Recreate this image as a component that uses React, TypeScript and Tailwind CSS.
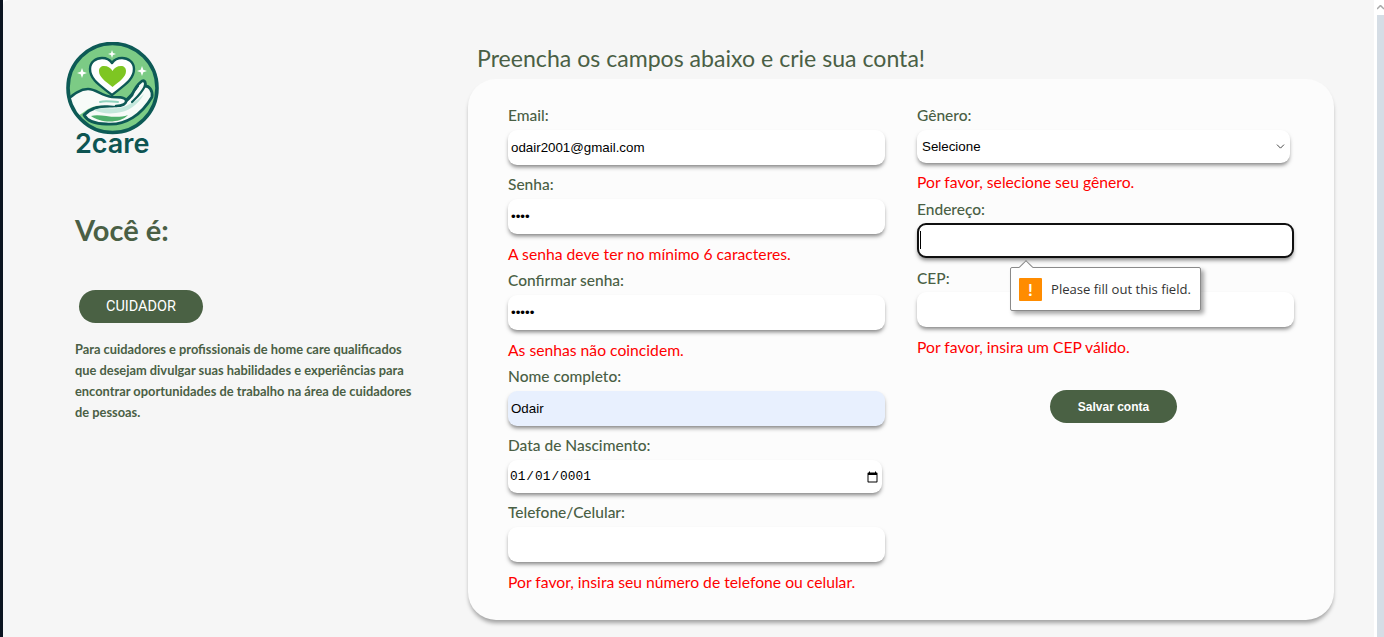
import { ChevronDown } from "lucide-react";

const Logo = () => (
  <svg width="96" height="96" viewBox="0 0 96 96" className="block">
    <defs>
      <clipPath id="disc">
        <circle cx="46.5" cy="46" r="44.5" />
      </clipPath>
    </defs>
    <circle cx="46.5" cy="46" r="44.5" fill="#7ccb85" />
    <g clipPath="url(#disc)">
      <path d="M18 73 C 24 66 34 64 44 64 C 54 65 60 60 66 53 C 68 48 72 42 76 39 C 79 38 80 41 79 44 C 83 44 87 48 86 55 C 76 72 60 84 40 82 C 30 82 22 80 18 73 Z" fill="#f7fbf8" stroke="#0d5a56" strokeWidth="2.8" strokeLinejoin="round" />
      <path d="M28 68 C 38 64 48 69 60 64 C 68 60 72 58 78 52 C 72 63 62 70 50 71 C 42 72 34 71 28 68 Z" fill="#c4e8dc" />
      <path d="M25 74 C 35 71 48 78 62 73 C 54 82 34 81 25 74 Z" fill="#4fb06c" />
      <path d="M-2 60 C 8 52 14 47 22 47 C 30 47 36 54 46 55 C 52 55 58 55 60 58 C 61 62 56 64 50 64 C 42 63 30 62 22 67 C 16 71 10 76 4 78 L -2 72 Z" fill="#f7fbf8" />
      <path d="M-2 60 C 8 52 14 47 22 47 C 30 47 36 54 46 55 C 52 55 58 55 60 58 C 61 62 56 64 50 64" fill="none" stroke="#0d5a56" strokeWidth="2.6" strokeLinecap="round" />
      <path d="M34 60 C 40 58 46 60 52 60" fill="none" stroke="#8fd3bd" strokeWidth="2" strokeLinecap="round" />
    </g>
    <path d="M60 58 C 64 54 68 50 72 44 M66 60 C 70 56 75 52 79 44" fill="none" stroke="#0d5a56" strokeWidth="2.2" strokeLinecap="round" />
    <path d="M46 53 C 35 44 24 38 24 27 C 24 20 30 16 36 16 C 40 16 44 18 46 21 C 48 18 52 16 56 16 C 62 16 68 20 68 27 C 68 38 57 44 46 53 Z" fill="#ffffff" stroke="#0d5a56" strokeWidth="2.4" strokeLinejoin="round" />
    <path d="M46.5 45 C 39 39 33 35 33 29 C 33 26 35 24 38 24 C 42 24 45 26 46.5 29 C 48 26 51 24 55 24 C 58 24 60 26 60 29 C 60 35 54 39 46.5 45 Z" fill="#7ec622" />
    <circle cx="46.5" cy="46" r="44.5" fill="none" stroke="#0d5a56" strokeWidth="3.6" />
    <path d="M46 8 L47 11 L50 12 L47 13 L46 16 L45 13 L42 12 L45 11 Z" fill="#ffffff" />
    <path d="M16 26 L17.3 29.7 L21 31 L17.3 32.3 L16 36 L14.7 32.3 L11 31 L14.7 29.7 Z" fill="#ffffff" />
    <path d="M76 24 L77.3 27.7 L81 29 L77.3 30.3 L76 34 L74.7 30.3 L71 29 L74.7 27.7 Z" fill="#ffffff" />
  </svg>
);

const Field = ({ label, error, children, labelClass }: { label: string; error?: string; children: React.ReactNode; labelClass?: string }) => (
  <div className={`relative ${error ? "mb-[9px]" : "mb-[10px]"}`}>
    <label className={`mb-1 block h-5 text-[15.5px] font-medium text-[#4a5f45] ${labelClass ?? "leading-[18px]"}`}>{label}</label>
    {children}
    {error && <p className="mt-[11px] h-[17px] text-[15.7px] leading-[18px] text-[#ff0000]">{error}</p>}
  </div>
);

const inputClass =
  "block h-[35px] w-full rounded-[9px] bg-white pl-[3px] text-[13.33px] text-black shadow-[0_3px_4px_-1px_rgba(0,0,0,0.5)] outline-none [font-family:'Liberation_Sans',sans-serif]";

const App = () => {
  return (
    <div className="flex h-[637px] w-[1384px] overflow-hidden bg-white [font-family:'Lato',sans-serif]">
      <div className="w-[3px] shrink-0 bg-[#0b1420]" />
      <main className="flex h-full w-[1371px] shrink-0 rounded-tl-[6px] bg-[#f6f6f6]">
        <aside className="w-[465px] shrink-0 pt-[42px] pl-[63px]">
          <Logo />
          <p className="mt-[-9px] ml-[9px] h-[30px] text-[27px] leading-[30px] font-semibold text-[#0d5452] [font-family:'Inter',sans-serif]">2care</p>
          <h2 className="mt-[53px] ml-[9px] text-[29px] leading-9 font-bold text-[#4a5f45]">Você é:</h2>
          <button className="mt-[42px] ml-[13px] block h-[33px] w-[124px] rounded-full bg-[#4a6144] text-[14.5px] text-white [font-family:'Roboto',sans-serif]">
            CUIDADOR
          </button>
          <p className="mt-[16px] ml-[9px] w-[345px] text-[12.85px] leading-[21px] font-bold text-[#4a5f45]">
            Para cuidadores e profissionais de home care qualificados que desejam divulgar suas habilidades e experiências para encontrar oportunidades de trabalho na área de cuidadores de pessoas.
          </p>
        </aside>

        <section className="pt-[43px]">
          <h1 className="ml-[9px] h-[36px] text-[23.1px] leading-[30px] text-[#4a5f45]">Preencha os campos abaixo e crie sua conta!</h1>
          <form className="grid h-[541px] w-[866px] grid-cols-[377px_377px] gap-x-[32px] rounded-[28px] bg-[#fcfcfc] pt-[27px] pl-[40px] shadow-[0_4px_4px_-1px_rgba(0,0,0,0.35)]">
            <div>
              <Field label="Email:">
                <input className={inputClass} defaultValue="odair2001@gmail.com" readOnly />
              </Field>
              <Field label="Senha:" error="A senha deve ter no mínimo 6 caracteres.">
                <input className={inputClass} type="password" defaultValue="1234" readOnly />
              </Field>
              <Field label="Confirmar senha:" error="As senhas não coincidem.">
                <input className={inputClass} type="password" defaultValue="12345" readOnly />
              </Field>
              <Field label="Nome completo:">
                <input className={`${inputClass} !bg-[#e8f0fe]`} defaultValue="Odair" readOnly />
              </Field>
              <Field label="Data de Nascimento:">
                <input
                  type="date"
                  className="block h-[33px] w-[374px] rounded-[9px] bg-white px-[1px] pt-px text-[12.8px] text-black shadow-[0_3px_4px_-1px_rgba(0,0,0,0.5)] outline-none [font-family:'Liberation_Mono',monospace]"
                  defaultValue="0001-01-01"
                />
              </Field>
              <Field label="Telefone/Celular:" error="Por favor, insira seu número de telefone ou celular.">
                <input className={inputClass} readOnly />
              </Field>
            </div>

            <div>
              <Field label="Gênero:" error="Por favor, selecione seu gênero.">
                <div className="relative h-8">
                  <select className="block h-[33px] w-[373px] appearance-none rounded-[9px] bg-white pl-[5px] text-[13.33px] text-black shadow-[0_3px_4px_-1px_rgba(0,0,0,0.5)] outline-none [font-family:'Liberation_Sans',sans-serif]" defaultValue="">
                    <option value="">Selecione</option>
                  </select>
                  <ChevronDown size={13} strokeWidth={1.8} className="absolute top-[10px] right-[7px] text-[#444444]" />
                </div>
              </Field>
              <Field label="Endereço:" labelClass="leading-[20px]">
                <div className="relative">
                  <input className={`${inputClass} border-2 border-[#101010]`} readOnly />
                  <span className="absolute top-[8px] left-[3px] h-[18px] w-px bg-black" />
                </div>
                <div className="absolute top-[68px] left-[93px] z-10 flex h-[44px] w-[191px] items-center rounded-[2px] border border-[#8a8a8a] bg-white pl-2 shadow-[3px_3px_4px_rgba(0,0,0,0.35)]">
                  <span className="absolute top-[-6px] left-[10px] size-[10px] rotate-45 border-t border-l border-[#8a8a8a] bg-white" />
                  <span className="flex size-[23px] items-center justify-center rounded-[1px] bg-[#ff8c00] text-[17px] leading-none font-bold text-white">!</span>
                  <span className="mt-[2px] ml-[9px] text-[13.1px] whitespace-nowrap text-[#333333] [font-family:'Open_Sans',sans-serif]">Please fill out this field.</span>
                </div>
              </Field>
              <Field label="CEP:" labelClass="leading-[20px]" error="Por favor, insira um CEP válido.">
                <input className={inputClass} readOnly />
              </Field>
              <button type="button" className="mt-[35px] ml-[133px] block h-[33px] w-[127px] rounded-full bg-[#4a6144] text-[12px] font-bold text-white [font-family:'Liberation_Sans',sans-serif]">
                Salvar conta
              </button>
            </div>
          </form>
        </section>
      </main>
      <div className="ml-[3px] flex w-[7px] shrink-0 flex-col">
        <div className="h-[15px] pt-[5px] text-[#a8a8a8]">
          <svg width="7" height="5" viewBox="0 0 7 5"><path d="M0 4 L3.5 0.5 L7 4" fill="none" stroke="currentColor" strokeWidth="1.5" /></svg>
        </div>
        <div className="flex-1 bg-[#d5dde5]" />
      </div>
    </div>
  );
};

export default App;
